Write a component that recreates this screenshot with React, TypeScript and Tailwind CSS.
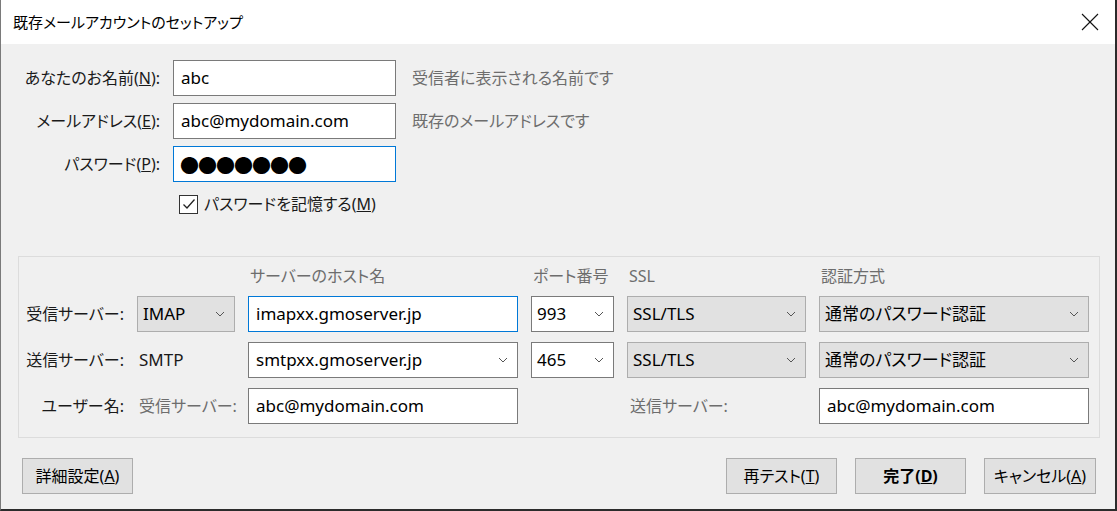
import React from "react";

const font = "font-['Noto_Sans','Noto_Sans_CJK_JP',sans-serif] [font-feature-settings:'palt']";

const Chevron = () => (
  <svg width="10" height="6" viewBox="0 0 10 6" className="shrink-0">
    <polyline points="1,1 5,5 9,1" fill="none" stroke="#555" strokeWidth="1" />
  </svg>
);

const TextBox = ({ value, focus, className = "" }: { value: string; focus?: boolean; className?: string }) => (
  <div
    className={`h-[36px] flex items-center pl-[7px] bg-white border text-[17px] text-black ${
      focus ? "border-[#0078d7]" : "border-[#7a7a7a]"
    } ${className}`}
  >
    {value}
  </div>
);

const Select = ({ value, gray, className = "" }: { value: string; gray?: boolean; className?: string }) => (
  <div
    className={`h-[36px] flex items-center justify-between pl-[5px] pr-[9px] border text-[17px] text-black ${
      gray ? "bg-[#e1e1e1] border-[#adadad]" : "bg-white border-[#7a7a7a]"
    } ${className}`}
  >
    <span>{value}</span>
    <Chevron />
  </div>
);

const Button = ({ children, bold, className = "" }: { children: React.ReactNode; bold?: boolean; className?: string }) => (
  <div
    className={`h-[36px] flex items-center justify-center bg-[#e1e1e1] border border-[#adadad] text-[16px] text-black ${
      bold ? "font-bold" : ""
    } ${className}`}
  >
    {children}
  </div>
);

export default function App() {
  return (
    <div className={`w-[1117px] h-[511px] flex flex-col bg-[#f0f0f0] border-l border-l-[#7a7a7a] border-r-2 border-r-[#2b2b2b] border-b-2 border-b-[#2b2b2b] ${font}`}>
      {/* title bar */}
      <div className="h-[44px] shrink-0 bg-white flex items-center justify-between pl-[12px] pr-[16px]">
        <span className="text-[15px] text-black">既存メールアカウントのセットアップ</span>
        <svg width="18" height="18" viewBox="0 0 18 18">
          <line x1="1" y1="1" x2="17" y2="17" stroke="#111" strokeWidth="1.1" />
          <line x1="17" y1="1" x2="1" y2="17" stroke="#111" strokeWidth="1.1" />
        </svg>
      </div>

      {/* account fields */}
      <div className="flex flex-col gap-[7px] pt-[16px]">
        <div className="flex items-center">
          <div className="w-[159px] text-right text-[16px] text-[#1a1a1a]">
            あなたのお名前(<u>N</u>):
          </div>
          <TextBox value="abc" className="ml-[13px] w-[223px]" />
          <span className="ml-[16px] text-[16px] text-[#6d6d6d]">受信者に表示される名前です</span>
        </div>
        <div className="flex items-center">
          <div className="w-[159px] text-right text-[16px] text-[#1a1a1a]">
            メールアドレス(<u>E</u>):
          </div>
          <TextBox value="abc@mydomain.com" className="ml-[13px] w-[223px]" />
          <span className="ml-[16px] text-[16px] text-[#6d6d6d]">既存のメールアドレスです</span>
        </div>
        <div className="flex items-center">
          <div className="w-[159px] text-right text-[16px] text-[#1a1a1a]">
            パスワード(<u>P</u>):
          </div>
          <div className="ml-[13px] w-[223px] h-[36px] flex items-center pl-[6px] bg-white border border-[#0078d7] text-[19px] leading-none tracking-[-1px] text-black font-['Noto_Sans_CJK_JP',sans-serif]">
            ●●●●●●●
          </div>
        </div>
        <div className="flex items-center ml-[178px] mt-[3px] gap-[6px]">
          <div className="w-[19px] h-[19px] bg-white border border-[#333] flex items-center justify-center">
            <svg width="14" height="12" viewBox="0 0 14 12">
              <polyline points="1.5,6.5 5,10 12.5,1.5" fill="none" stroke="#222" strokeWidth="1.3" />
            </svg>
          </div>
          <span className="text-[16px] text-[#1a1a1a]">
            パスワードを記憶する(<u>M</u>)
          </span>
        </div>
      </div>

      {/* server group */}
      <div className="mt-[40px] ml-[17px] mr-[15px] border border-[#dcdcdc] pt-[9px] pb-[13px] pr-[10px]">
        <div className="grid grid-cols-[105px_98px_270px_83px_179px_270px] gap-x-[13px] gap-y-[10px] text-[16px]">
          {/* header */}
          <div className="h-[20px]" />
          <div />
          <div className="h-[20px] flex items-center pl-[2px] text-[#6d6d6d]">サーバーのホスト名</div>
          <div className="h-[20px] flex items-center pl-[2px] text-[#6d6d6d]">ポート番号</div>
          <div className="h-[20px] flex items-center pl-[2px] text-[#6d6d6d]">SSL</div>
          <div className="h-[20px] flex items-center pl-[2px] text-[#6d6d6d]">認証方式</div>

          {/* incoming */}
          <div className="flex items-center justify-end text-[#1a1a1a]">受信サーバー:</div>
          <Select value="IMAP" gray />
          <TextBox value="imapxx.gmoserver.jp" focus />
          <Select value="993" />
          <Select value="SSL/TLS" gray />
          <Select value="通常のパスワード認証" gray />

          {/* outgoing */}
          <div className="flex items-center justify-end text-[#1a1a1a]">送信サーバー:</div>
          <div className="flex items-center pl-[2px] text-[17px] text-[#1a1a1a]">SMTP</div>
          <Select value="smtpxx.gmoserver.jp" className="pl-[7px]" />
          <Select value="465" />
          <Select value="SSL/TLS" gray />
          <Select value="通常のパスワード認証" gray />

          {/* username */}
          <div className="flex items-center justify-end text-[#1a1a1a]">ユーザー名:</div>
          <div className="flex items-center pl-[2px] text-[#6d6d6d] whitespace-nowrap">受信サーバー:</div>
          <TextBox value="abc@mydomain.com" />
          <div />
          <div className="flex items-center pl-[3px] text-[#6d6d6d]">送信サーバー:</div>
          <TextBox value="abc@mydomain.com" />
        </div>
      </div>

      {/* buttons */}
      <div className="flex items-center mt-[20px] pl-[21px] pr-[19px]">
        <Button className="w-[111px]">
          詳細設定(<u>A</u>)
        </Button>
        <div className="flex-1" />
        <div className="flex gap-[18px]">
          <Button className="w-[111px]">
            再テスト(<u>T</u>)
          </Button>
          <Button className="w-[111px]" bold>
            完了(<u>D</u>)
          </Button>
          <Button className="w-[112px]">
            キャンセル(<u>A</u>)
          </Button>
        </div>
      </div>
    </div>
  );
}
